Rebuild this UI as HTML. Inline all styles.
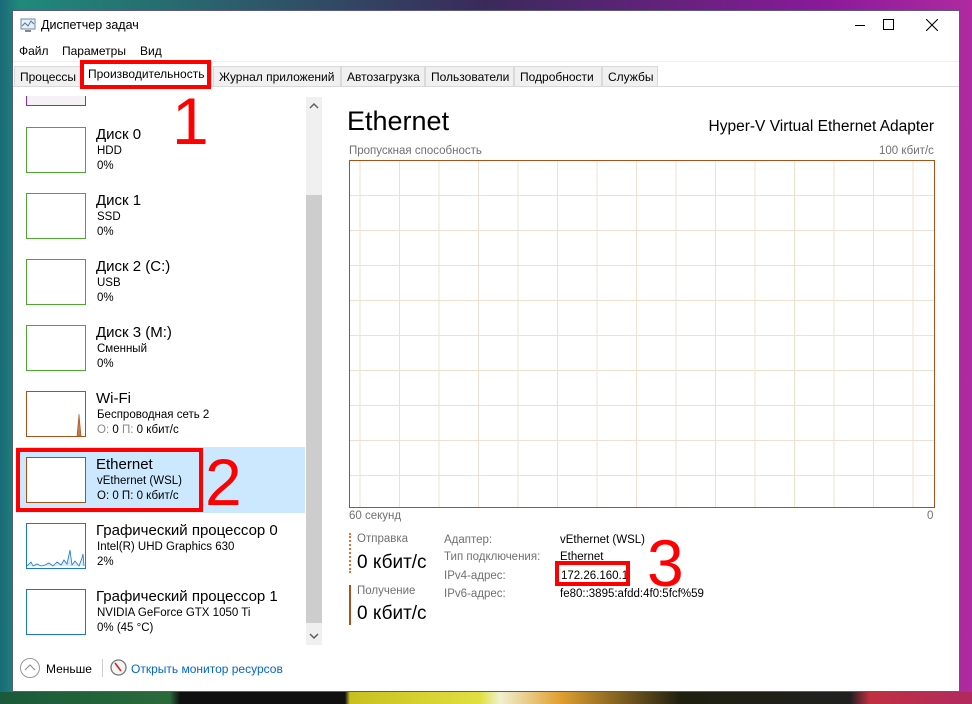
<!DOCTYPE html>
<html><head><meta charset="utf-8"><style>
*{margin:0;padding:0;box-sizing:border-box}
body{width:972px;height:704px;overflow:hidden;position:relative;font-family:"Liberation Sans","DejaVu Sans",sans-serif;
background:linear-gradient(90deg,#1a6a78 0%,#1f8a7a 2%,#3a2a5a 50%,#8a1a9a 85%,#b02aa0 100%);}
.bot{position:absolute;left:0;top:692px;width:972px;height:12px;background:linear-gradient(90deg,#1a5a3a 0,#2a6a3a 170px,#101010 180px,#101010 345px,#c8c020 350px,#e0e040 480px,#f0f0d0 500px,#e0a030 560px,#202010 680px,#202020 850px,#c03040 870px,#b02a60 972px)}
.a{position:absolute;white-space:nowrap}
.win{position:absolute;left:12px;top:10px;width:948px;height:682px;background:#fff;border:1px solid #5a5a8a}
.tab{position:absolute;top:66px;height:21px;background:#f0f0f0;border:1px solid #d9d9d9;font-size:12px;line-height:20px;padding-left:5px;color:#000}
.box{position:absolute;left:26px;width:60px;height:46px;border:1px solid #4ea72e;background:#fff}
.t1{font-size:15px;color:#000}
.t2{font-size:11.5px;color:#000}
.rb{position:absolute;border:4px solid #f00}
.num{position:absolute;color:#f00;font-size:66px;line-height:1;font-family:"Liberation Sans",sans-serif}
.lbl{font-size:11.5px;color:#707070}
</style></head><body>
<div class="bot"></div>
<div class="win"></div>
<svg class="a" style="left:20px;top:17px" width="16" height="16"><rect x="1" y="2" width="14" height="10" fill="#eee" stroke="#6a8aa8"/><path d="M2 9 L5 6 L8 9 L11 4 L14 7" stroke="#3a7ac0" fill="none"/><rect x="5" y="13" width="6" height="2" fill="#888"/></svg>
<div class="a" style="left:41px;top:18px;font-size:12.5px">Диспетчер задач</div>
<div class="a" style="left:855px;top:25px;width:10px;height:1px;background:#000"></div>
<div class="a" style="left:883px;top:19px;width:11px;height:11px;border:1px solid #000"></div>
<svg class="a" style="left:926px;top:19px" width="12" height="12"><path d="M0 0L12 12M12 0L0 12" stroke="#000" stroke-width="1.1"/></svg>
<div class="a" style="left:19px;top:44px;font-size:12px">Файл</div>
<div class="a" style="left:62px;top:44px;font-size:12px">Параметры</div>
<div class="a" style="left:140px;top:44px;font-size:12px">Вид</div>
<div class="a" style="left:13px;top:61px;width:946px;height:1px;background:#f0f0f0"></div>
<div class="a" style="left:13px;top:86px;width:946px;height:1px;background:#d9d9d9"></div>
<div class="tab" style="left:14px;width:68px">Процессы</div>
<div class="tab" style="left:82px;top:62px;height:25px;width:130px;background:#fff;border-bottom:none;font-size:12px;line-height:22px">Производительность</div>
<div class="tab" style="left:213px;width:128px">Журнал приложений</div>
<div class="tab" style="left:341px;width:84px">Автозагрузка</div>
<div class="tab" style="left:425px;width:89px">Пользователи</div>
<div class="tab" style="left:514px;width:88px">Подробности</div>
<div class="tab" style="left:602px;width:56px">Службы</div>
<div class="a" style="left:26px;top:96px;width:60px;height:10px;border:1px solid #9528b4;border-top:none;background:#f4f2f4"></div>
<div class="a" style="left:16px;top:447px;width:289px;height:66px;background:#cce8ff"></div>
<div class="box" style="top:127px"></div><div class="a t1" style="left:96px;top:126px">Диск 0</div><div class="a t2" style="left:97px;top:145px">HDD</div><div class="a t2" style="left:97px;top:160px">0%</div>
<div class="box" style="top:193px"></div><div class="a t1" style="left:96px;top:192px">Диск 1</div><div class="a t2" style="left:97px;top:211px">SSD</div><div class="a t2" style="left:97px;top:226px">0%</div>
<div class="box" style="top:259px"></div><div class="a t1" style="left:96px;top:258px">Диск 2 (C:)</div><div class="a t2" style="left:97px;top:277px">USB</div><div class="a t2" style="left:97px;top:292px">0%</div>
<div class="box" style="top:325px"></div><div class="a t1" style="left:96px;top:324px">Диск 3 (M:)</div><div class="a t2" style="left:97px;top:343px">Сменный</div><div class="a t2" style="left:97px;top:358px">0%</div>
<div class="box" style="top:391px;border-color:#a7511b"><svg width="58" height="44" style="position:absolute;left:0;top:0"><path d="M50 44 L52 22 L54 44Z" fill="#c47a40" stroke="#a7511b" stroke-width=".6"/></svg></div>
<div class="a t1" style="left:96px;top:390px">Wi-Fi</div><div class="a t2" style="left:97px;top:409px">Беспроводная сеть 2</div><div class="a t2" style="left:97px;top:424px"><span style="color:#888">О:</span> 0 <span style="color:#888">П:</span> 0 кбит/с</div>
<div class="box" style="top:457px;border-color:#a7511b"></div>
<div class="a t1" style="left:96px;top:456px">Ethernet</div><div class="a t2" style="left:97px;top:475px">vEthernet (WSL)</div><div class="a t2" style="left:97px;top:490px">О: 0 П: 0 кбит/с</div>
<div class="box" style="top:523px;border-color:#1979c5"><svg width="58" height="44" style="position:absolute;left:0;top:0"><path d="M0 42 L4 38 L6 42 L10 40 L14 42 L18 41 L22 39 L26 42 L30 38 L34 41 L37 36 L40 40 L43 26 L45 41 L48 37 L52 42 L55 34 L56 30 L57 42" stroke="#1979c5" fill="#dcebf7" stroke-width=".8"/></svg></div>
<div class="a t1" style="left:96px;top:522px">Графический процессор 0</div><div class="a t2" style="left:97px;top:541px">Intel(R) UHD Graphics 630</div><div class="a t2" style="left:97px;top:556px">2%</div>
<div class="box" style="top:589px;border-color:#1979c5"></div>
<div class="a t1" style="left:96px;top:588px">Графический процессор 1</div><div class="a t2" style="left:97px;top:607px">NVIDIA GeForce GTX 1050 Ti</div><div class="a t2" style="left:97px;top:622px">0% (45 °C)</div>
<div class="a" style="left:306px;top:97px;width:16px;height:548px;background:#f0f0f0"></div>
<div class="a" style="left:306px;top:195px;width:16px;height:428px;background:#cdcdcd"></div>
<svg class="a" style="left:309px;top:102px" width="10" height="8"><path d="M1 6L5 2L9 6" stroke="#606060" fill="none" stroke-width="1.5"/></svg>
<svg class="a" style="left:309px;top:632px" width="10" height="8"><path d="M1 2L5 6L9 2" stroke="#606060" fill="none" stroke-width="1.5"/></svg>
<div class="a" style="left:20px;top:658px;width:20px;height:20px;border:1px solid #999;border-radius:50%"></div>
<svg class="a" style="left:24px;top:663px" width="12" height="8"><path d="M1 7L6 2L11 7" stroke="#888" fill="none"/></svg>
<div class="a" style="left:46px;top:662px;font-size:12px">Меньше</div>
<div class="a" style="left:102px;top:659px;width:1px;height:18px;background:#ccc"></div>
<svg class="a" style="left:110px;top:659px" width="17" height="17"><circle cx="8.5" cy="8.5" r="7.5" fill="#f4f4f4" stroke="#777" stroke-width="1.3"/><path d="M5 4L11 12" stroke="#d02020" stroke-width="1.6"/></svg>
<div class="a" style="left:131px;top:662px;font-size:12px;color:#0066cc">Открыть монитор ресурсов</div>
<div class="a" style="left:347px;top:106px;font-size:27px;color:#000">Ethernet</div>
<div class="a" style="right:38px;top:118px;font-size:15.5px;color:#000">Hyper-V Virtual Ethernet Adapter</div>
<div class="a lbl" style="left:349px;top:145px">Пропускная способность</div>
<div class="a lbl" style="left:879px;top:145px">100 кбит/с</div>
<svg class="a" style="left:349px;top:160px" width="586" height="348">
<g stroke="#efe0d0" stroke-width="1">
<path d="M11 0V348M50.5 0V348M90 0V348M129.5 0V348M169 0V348M208.5 0V348M248 0V348M287.5 0V348M327 0V348M366.5 0V348M406 0V348M445.5 0V348M485 0V348M524.5 0V348M564 0V348"/>
<path d="M0 35.5H586M0 70.5H586M0 105.5H586M0 140.5H586M0 175.5H586M0 210.5H586M0 245.5H586M0 280.5H586M0 315.5H586"/>
</g>
<rect x="0.5" y="0.5" width="585" height="347" fill="none" stroke="#a7511b"/>
</svg>
<div class="a lbl" style="left:349px;top:510px">60 секунд</div>
<div class="a lbl" style="left:927px;top:510px">0</div>
<div class="a" style="left:349px;top:533px;width:2px;height:40px;border-left:2px dotted #e07030"></div>
<div class="a lbl" style="left:357px;top:533px">Отправка</div>
<div class="a" style="left:357px;top:552px;font-size:19px">0 кбит/с</div>
<div class="a" style="left:349px;top:585px;width:2px;height:40px;background:#a7511b"></div>
<div class="a lbl" style="left:357px;top:585px">Получение</div>
<div class="a" style="left:357px;top:603px;font-size:19px">0 кбит/с</div>
<div class="a lbl" style="left:444px;top:534px">Адаптер:</div>
<div class="a lbl" style="left:444px;top:551px">Тип подключения:</div>
<div class="a lbl" style="left:444px;top:570px">IPv4-адрес:</div>
<div class="a lbl" style="left:444px;top:588px">IPv6-адрес:</div>
<div class="a t2" style="left:560px;top:534px">vEthernet (WSL)</div>
<div class="a t2" style="left:560px;top:551px">Ethernet</div>
<div class="a t2" style="left:561px;top:570px">172.26.160.1</div>
<div class="a t2" style="left:560px;top:588px">fe80::3895:afdd:4f0:5fcf%59</div>
<div class="rb" style="left:80px;top:60px;width:131px;height:29px"></div>
<div class="rb" style="left:16px;top:448px;width:187px;height:64px"></div>
<div class="rb" style="left:555px;top:561px;width:75px;height:25px"></div>
<div class="num" style="left:172px;top:88px">1</div>
<div class="num" style="left:205px;top:449px">2</div>
<div class="num" style="left:647px;top:530px">3</div>
</body></html>
